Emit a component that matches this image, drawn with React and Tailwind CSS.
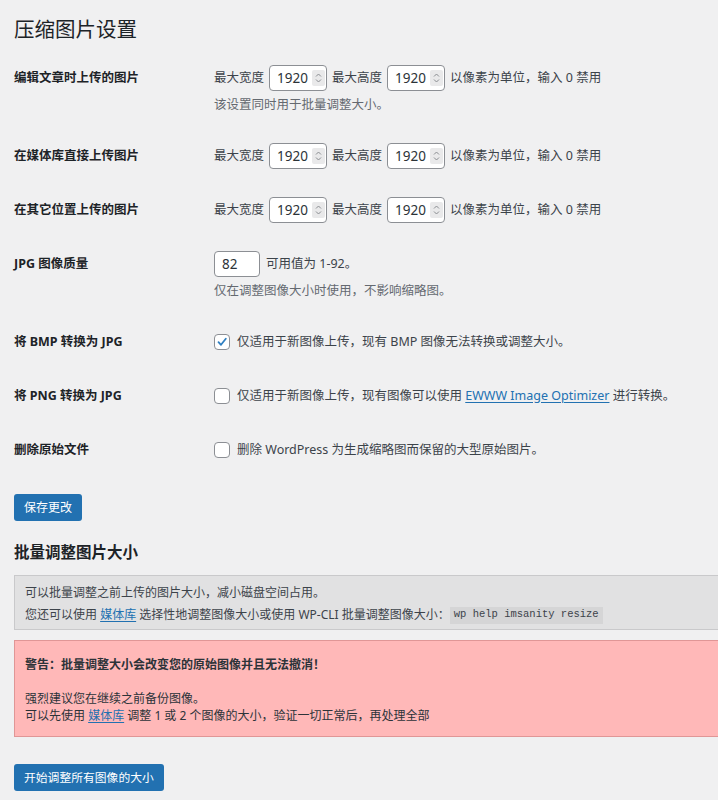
import React from 'react';

const sizeRows = [
  { label: '编辑文章时上传的图片', note: '该设置同时用于批量调整大小。' },
  { label: '在媒体库直接上传图片' },
  { label: '在其它位置上传的图片' },
];

const Spinner = () => (
  <span className="flex h-[16px] w-[13px] items-center justify-center rounded-[2px] bg-[#e9e9ea]">
    <svg width="7" height="12" viewBox="0 0 7 12" fill="none" stroke="#8a8d91" strokeWidth="1">
      <path d="M1 4.5 3.5 2 6 4.5" />
      <path d="M1 7.5 3.5 10 6 7.5" />
    </svg>
  </span>
);

const NumberBox = ({ value }) => (
  <span className="flex h-[26px] w-[58px] items-center justify-between rounded-[4px] border border-[#8c8f94] bg-white pl-[7px] pr-[1px] text-[13.5px] text-[#2c3338]">
    {value}
    <Spinner />
  </span>
);

const Checkbox = ({ checked }) => (
  <span className="flex h-[16px] w-[16px] shrink-0 items-center justify-center rounded-[4px] border border-[#8c8f94] bg-white">
    {checked && (
      <svg width="12" height="12" viewBox="0 0 12 12" fill="none" stroke="#2f7fc1" strokeWidth="1.8" strokeLinecap="round" strokeLinejoin="round">
        <path d="M2.5 6.2 5 8.8 9.8 2.8" />
      </svg>
    )}
  </span>
);

const Row = ({ label, children }) => (
  <div className="flex py-[14px]">
    <div className="w-[200px] shrink-0 text-[12.5px] font-bold leading-[26px] text-[#1d2327]">
      {label}
    </div>
    <div className="flex-1">{children}</div>
  </div>
);

const Note = ({ children }) => (
  <div className="mt-[4px] text-[12.5px] leading-[20px] text-[#646970]">{children}</div>
);

const Link = ({ children }) => (
  <a href="#" className="text-[#2271b1] underline underline-offset-2">
    {children}
  </a>
);

export default function App() {
  return (
    <div className="min-h-[800px] w-full bg-[#f0f0f1] pl-[14px] font-['Noto_Sans','Noto_Sans_CJK_SC',sans-serif] text-[#3c434a]">
      <h1 className="pt-[15px] text-[20.5px] font-normal leading-[28px] text-[#1d2327]">压缩图片设置</h1>

      <div className="mt-[8px]">
        {sizeRows.map((r) => (
          <Row key={r.label} label={r.label}>
            <div className="flex h-[26px] items-center gap-[5px] text-[12.5px]">
              <span>最大宽度</span>
              <NumberBox value="1920" />
              <span>最大高度</span>
              <NumberBox value="1920" />
              <span>以像素为单位，输入 0 禁用</span>
            </div>
            {r.note && <Note>{r.note}</Note>}
          </Row>
        ))}

        <Row label="JPG 图像质量">
          <div className="flex h-[26px] items-center gap-[6px] text-[12.5px]">
            <span className="flex h-[26px] w-[46px] items-center rounded-[4px] border border-[#8c8f94] bg-white pl-[7px] text-[13.5px] text-[#2c3338]">
              82
            </span>
            <span>可用值为 1-92。</span>
          </div>
          <Note>仅在调整图像大小时使用，不影响缩略图。</Note>
        </Row>

        <Row label="将 BMP 转换为 JPG">
          <div className="flex h-[26px] items-center gap-[7px] text-[12.5px]">
            <Checkbox checked />
            <span>仅适用于新图像上传，现有 BMP 图像无法转换或调整大小。</span>
          </div>
        </Row>

        <Row label="将 PNG 转换为 JPG">
          <div className="flex h-[26px] items-center gap-[7px] text-[12.5px]">
            <Checkbox />
            <span>
              仅适用于新图像上传，现有图像可以使用 <Link>EWWW Image Optimizer</Link> 进行转换。
            </span>
          </div>
        </Row>

        <Row label="删除原始文件">
          <div className="flex h-[26px] items-center gap-[7px] text-[12.5px]">
            <Checkbox />
            <span>删除 WordPress 为生成缩略图而保留的大型原始图片。</span>
          </div>
        </Row>
      </div>

      <button className="mt-[17px] flex h-[27px] items-center rounded-[3px] bg-[#2271b1] px-[10px] text-[12px] text-white">
        保存更改
      </button>

      <h2 className="mt-[19px] text-[15.5px] font-bold leading-[24px] text-[#1d2327]">批量调整图片大小</h2>

      <div className="mt-[11px] border-y border-l border-[#c9c9cb] bg-[#e1e1e2] pb-[3px] pl-[10px] pt-[6px] text-[12px] text-[#3c434a]">
        <div className="leading-[22px]">可以批量调整之前上传的图片大小，减小磁盘空间占用。</div>
        <div className="flex h-[22px] items-center">
          <span>
            您还可以使用 <Link>媒体库</Link> 选择性地调整图像大小或使用 WP-CLI 批量调整图像大小：
          </span>
          <code className="flex h-[17px] items-center bg-[#d5d5d6] px-[4px] font-['Liberation_Mono',monospace] text-[10.5px] text-[#3c434a]">
            wp help imsanity resize
          </code>
        </div>
      </div>

      <div className="mt-[10px] border-y border-l border-[#e09696] bg-[#ffb8b8] pb-[12px] pl-[10px] pt-[14px] text-[12px] text-[#2c3338]">
        <p className="font-bold leading-[20px]">警告：批量调整大小会改变您的原始图像并且无法撤消！</p>
        <p className="mt-[15px] leading-[17px]">强烈建议您在继续之前备份图像。</p>
        <p className="leading-[17px]">
          可以先使用 <Link>媒体库</Link> 调整 1 或 2 个图像的大小，验证一切正常后，再处理全部
        </p>
      </div>

      <button className="mt-[27px] flex h-[27px] items-center rounded-[3px] bg-[#2271b1] px-[10px] text-[11.8px] text-white">
        开始调整所有图像的大小
      </button>
    </div>
  );
}
